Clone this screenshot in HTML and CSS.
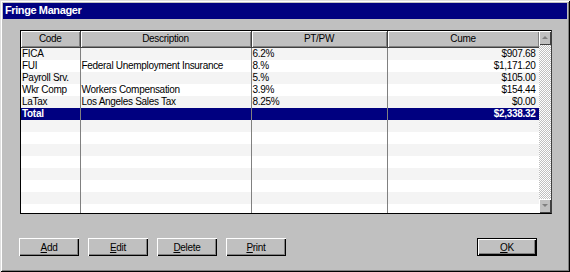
FILE: index.html
```html
<!DOCTYPE html>
<html lang="en">
    <head>
        <meta charset="UTF-8">
        <title>Fringe Manager</title>
        <link rel="stylesheet" href="styles.css">
    </head>
    <body>
      <div class="window">
        <div class="titlebar">Fringe Manager</div>
        <div class="client">
          <div class="grid-frame">
            <div class="grid">
              <table>
                <colgroup>
                  <col class="c-code"><col class="c-desc"><col class="c-pt"><col class="c-cume">
                </colgroup>
                <thead>
                  <tr><th>Code</th><th>Description</th><th>PT/PW</th><th>Cume</th></tr>
                </thead>
                <tbody>
                  <tr><td>FICA</td><td></td><td>6.2%</td><td class="num">$907.68</td></tr>
                  <tr><td>FUI</td><td>Federal Unemployment Insurance</td><td>8.%</td><td class="num">$1,171.20</td></tr>
                  <tr><td>Payroll Srv.</td><td></td><td>5.%</td><td class="num">$105.00</td></tr>
                  <tr><td>Wkr Comp</td><td>Workers Compensation</td><td>3.9%</td><td class="num">$154.44</td></tr>
                  <tr><td>LaTax</td><td>Los Angeles Sales Tax</td><td>8.25%</td><td class="num">$0.00</td></tr>
                  <tr class="total"><td>Total</td><td></td><td></td><td class="num">$2,338.32</td></tr>
                  <tr><td></td><td></td><td></td><td></td></tr>
                  <tr><td></td><td></td><td></td><td></td></tr>
                  <tr><td></td><td></td><td></td><td></td></tr>
                  <tr><td></td><td></td><td></td><td></td></tr>
                  <tr><td></td><td></td><td></td><td></td></tr>
                  <tr><td></td><td></td><td></td><td></td></tr>
                  <tr><td></td><td></td><td></td><td></td></tr>
                  <tr><td></td><td></td><td></td><td></td></tr>
                </tbody>
              </table>
            </div>
            <div class="scrollbar">
              <div class="arrow up"></div>
              <div class="track"></div>
              <div class="arrow down"></div>
            </div>
          </div>
          <div class="buttons">
            <button type="button"><u>A</u>dd</button>
            <button type="button"><u>E</u>dit</button>
            <button type="button"><u>D</u>elete</button>
            <button type="button"><u>P</u>rint</button>
            <span class="spacer"></span>
            <button type="button" class="default"><u>O</u>K</button>
          </div>
        </div>
      </div>
    </body>
</html>
```

FILE: styles.css
```css
body {
    margin: 0;
    padding: 0;
    background: #c0c0c0;
    font-family: "Liberation Sans", Arial, sans-serif;
    font-size: 10px;
    letter-spacing: -0.3px;
    color: #000;
}

.window {
    width: 570px;
    height: 272px;
    box-sizing: border-box;
    padding: 3px;
    background: #c0c0c0;
    box-shadow: inset 1px 1px #dfdfdf, inset -1px -1px #000, inset 2px 2px #fff, inset -2px -2px #808080;
    display: flex;
    flex-direction: column;
}

.titlebar {
    height: 16px;
    line-height: 15px;
    background: #000080;
    color: #fff;
    font-size: 11px;
    font-weight: bold;
    letter-spacing: -0.4px;
    padding-left: 2px;
}

.client {
    flex: 1;
    display: flex;
    flex-direction: column;
    padding: 11px 15px 0 17px;
}

.grid-frame {
    display: flex;
    height: 184px;
    box-sizing: border-box;
    border: 1px solid #000;
    border-right-color: #404040;
    background: #fff;
}

.grid {
    width: 518px;
    overflow: hidden;
}

table {
    border-collapse: collapse;
    table-layout: fixed;
    width: 518px;
}

.c-code { width: 59px; }
.c-desc { width: 171px; }
.c-pt { width: 136px; }
.c-cume { width: 152px; }

th {
    height: 16px;
    box-sizing: border-box;
    padding: 0;
    font-weight: normal;
    background: #c0c0c0;
    border-right: 1px solid #404040;
    border-bottom: 1px solid #404040;
    box-shadow: inset 1px 1px #fff, inset -1px -1px #808080;
    text-align: center;
    line-height: 14px;
}

td {
    height: 12px;
    line-height: 12px;
    padding: 0 3px 0 1px;
    border-right: 1px solid #808080;
    white-space: nowrap;
    overflow: hidden;
}

tbody tr:nth-child(odd) td { background: #f4f4f4; }

td.num { text-align: right; }

tr.total td {
    background: #000080 !important;
    color: #fff;
    font-weight: bold;
}

.scrollbar {
    width: 12px;
    display: flex;
    flex-direction: column;
}

.track {
    flex: 1;
    background: repeating-conic-gradient(#c0c0c0 0 25%, #fff 0 50%) 0 0 / 2px 2px;
}

.arrow {
    height: 14px;
    background: #c0c0c0;
    box-shadow: inset 1px 1px #fff, inset -1px -1px #404040;
    position: relative;
}

.arrow::after {
    content: "";
    position: absolute;
    left: 3px;
    top: 5px;
    border-left: 3px solid transparent;
    border-right: 3px solid transparent;
}

.arrow.up::after { border-bottom: 3px solid #808080; }
.arrow.down::after { border-top: 3px solid #808080; }

.buttons {
    display: flex;
    gap: 9px;
    margin-top: 24px;
    margin-left: -1px;
}

.spacer { flex: 1; }

button {
    width: 60px;
    height: 18px;
    padding: 0;
    font-family: "Liberation Sans", Arial, sans-serif;
    font-size: 10px;
    letter-spacing: -0.3px;
    font-weight: normal;
    color: #000;
    background: #c0c0c0;
    border: 0;
    box-shadow: inset 1px 1px #fff, inset -1px -1px #000, inset -2px -2px #808080;
}

button.default {
    margin-right: 15px;
    box-shadow: inset 0 0 0 1px #000, inset 2px 2px #fff, inset -2px -2px #000, inset -3px -3px #808080;
}
```
